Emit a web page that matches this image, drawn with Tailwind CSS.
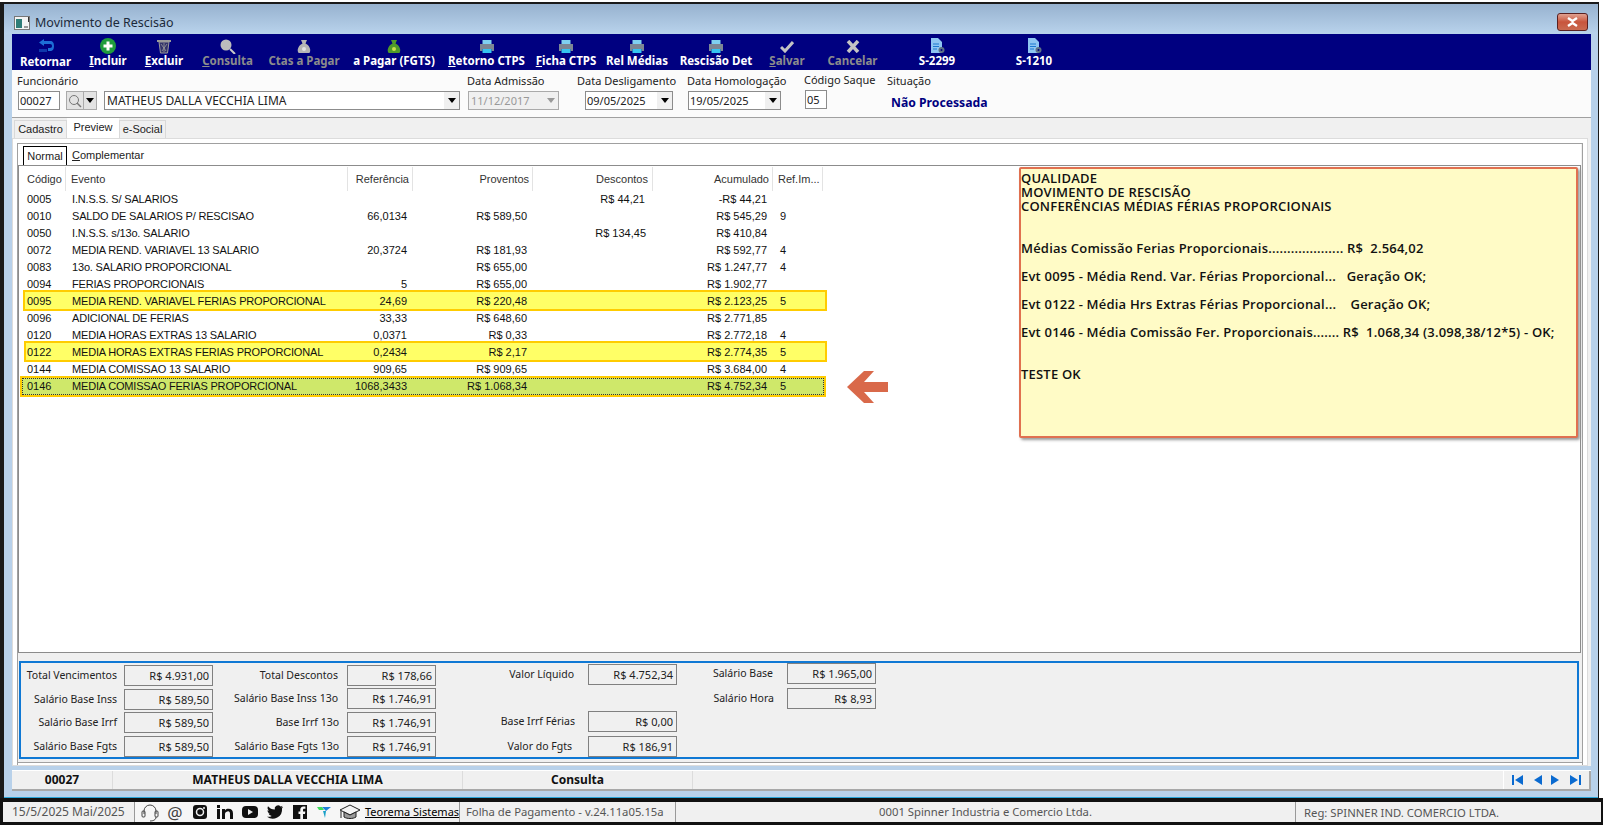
<!DOCTYPE html>
<html lang="pt-BR">
<head>
    <meta charset="UTF-8">
    <title>Movimento de Rescisão</title>
    <script src="https://cdn.jsdelivr.net/npm/@tailwindcss/browser@4"></script>
</head>
<body class="bg-white font-['Noto_Sans',sans-serif] text-[11px] text-black overflow-hidden">
<div class="w-[1603px] h-[825px] flex flex-col pt-[2px]">

    <!-- janela -->
    <div class="w-[1599px] h-[796px] flex flex-col border-t-2 border-l-4 border-r border-[#1a1a1a] bg-[#b8d1ea]">
        <div class="h-[30px] shrink-0 flex items-center justify-between pt-[8px] pl-[10px] pr-[10px] bg-gradient-to-b from-[#97b2cf] to-[#b9d3ec]">
            <div class="flex items-center gap-[5px]">
                <svg width="16" height="14" viewBox="0 0 16 14"><rect x="0.5" y="0.5" width="15" height="13" fill="#f4f4f4" stroke="#777"/><rect x="2" y="3" width="6" height="9" fill="#2f7d78"/><rect x="10" y="10" width="4" height="2" fill="#9a9a9a"/><rect x="14" y="1" width="1" height="5" fill="#333"/></svg>
                <span class="text-[12.500px] text-[#1c2a3a]">Movimento de Rescisão</span>
            </div>
            <div class="w-[31px] h-[18px] rounded-[3px] border border-[#5a2020] bg-gradient-to-b from-[#e0a090] via-[#c8553c] to-[#c96a50] flex items-center justify-center mb-[2px]">
                <svg width="13" height="10" viewBox="0 0 13 10"><path d="M2 1l4.500 3L11 1M2 9l4.500-3L11 9" stroke="#fff" stroke-width="2.400" fill="none"/></svg>
            </div>
        </div>

        <div class="flex-1 ml-[8px] mr-[7px] flex flex-col min-h-0">
            <!-- barra de ferramentas -->
            <div class="h-[36px] shrink-0 bg-[#000080] flex text-white font-bold text-[11.500px] leading-[14px]">
                <div class="w-[67px] flex flex-col items-center">
                    <svg class="mt-[5px]" width="16" height="15" viewBox="0 0 16 15"><path d="M6 0L1 3.500 6 7V5h6c1.500 0 2 .8 2 2s-.5 2-2 2H10v3h2c3 0 4-2 4-5s-1-5-4-5H6z" fill="#1d6fd6"/><path d="M2 10v3M4 10v3M6 10v3M8 10v3" stroke="#1d6fd6"/></svg>
                    <span class="mt-[1px]">Retornar</span>
                </div>
                <div class="w-[58px] flex flex-col items-center">
                    <svg class="mt-[4px]" width="16" height="16" viewBox="0 0 16 16"><circle cx="8" cy="8" r="8" fill="#1f9c3c"/><path d="M8 3.500v9M3.500 8h9" stroke="#fff" stroke-width="3"/></svg>
                    <span><u>I</u>ncluir</span>
                </div>
                <div class="w-[54px] flex flex-col items-center">
                    <svg class="mt-[5px]" width="14" height="15" viewBox="0 0 14 15"><path d="M0 1h14v2H0z" fill="#9a9a9a"/><path d="M2 3l1.500 11h7L12 3z" fill="#33336b" stroke="#9a9a9a"/><path d="M4 5l5 7M10 5l-5 7M7 4v9" stroke="#9a9a9a" stroke-width=".8"/></svg>
                    <span><u>E</u>xcluir</span>
                </div>
                <div class="w-[73px] flex flex-col items-center text-[#8c8c8c]">
                    <svg class="mt-[5px]" width="16" height="15" viewBox="0 0 16 15"><circle cx="6" cy="6" r="5.500" fill="#bdbdbd"/><path d="M10 10l5 5" stroke="#c8c8c8" stroke-width="2"/></svg>
                    <span><u>C</u>onsulta</span>
                </div>
                <div class="w-[80px] flex flex-col items-center text-[#8c8c8c]">
                    <svg class="mt-[5px]" width="14" height="15" viewBox="0 0 14 15"><path d="M4 1h6L8.500 4.500C12 6 14 10 13 13c-.3 1-1 1-2 1H3c-1 0-1.700 0-2-1C0 10 2 6 5.500 4.500z" fill="#b5b5b5"/><circle cx="7" cy="10" r="2" fill="#e2e2e2"/></svg>
                    <span>Ctas a Pagar</span>
                </div>
                <div class="w-[100px] flex flex-col items-center">
                    <svg class="mt-[5px]" width="14" height="15" viewBox="0 0 14 15"><path d="M4 1h6L8.500 4.500C12 6 14 10 13 13c-.3 1-1 1-2 1H3c-1 0-1.700 0-2-1C0 10 2 6 5.500 4.500z" fill="#4f9a2a"/><circle cx="7" cy="10" r="2" fill="#c9e04a"/></svg>
                    <span>a Pagar (FGTS)</span>
                </div>
                <div class="w-[85px] flex flex-col items-center">
                    <svg class="mt-[6px]" width="14" height="13" viewBox="0 0 14 13"><rect x="2.500" y="0" width="9" height="4" fill="#7fd0f0"/><rect x="0" y="4" width="14" height="5" fill="#7c8794"/><rect x="0" y="9" width="2.500" height="2" fill="#7c8794"/><rect x="11.500" y="9" width="2.500" height="2" fill="#7c8794"/><rect x="2.500" y="9" width="9" height="4" fill="#35c4f0"/></svg>
                    <span class="mt-[1px]"><u>R</u>etorno CTPS</span>
                </div>
                <div class="w-[74px] flex flex-col items-center">
                    <svg class="mt-[6px]" width="14" height="13" viewBox="0 0 14 13"><rect x="2.500" y="0" width="9" height="4" fill="#7fd0f0"/><rect x="0" y="4" width="14" height="5" fill="#7c8794"/><rect x="0" y="9" width="2.500" height="2" fill="#7c8794"/><rect x="11.500" y="9" width="2.500" height="2" fill="#7c8794"/><rect x="2.500" y="9" width="9" height="4" fill="#35c4f0"/></svg>
                    <span class="mt-[1px]"><u>F</u>icha CTPS</span>
                </div>
                <div class="w-[68px] flex flex-col items-center">
                    <svg class="mt-[6px]" width="14" height="13" viewBox="0 0 14 13"><rect x="2.500" y="0" width="9" height="4" fill="#7fd0f0"/><rect x="0" y="4" width="14" height="5" fill="#7c8794"/><rect x="0" y="9" width="2.500" height="2" fill="#7c8794"/><rect x="11.500" y="9" width="2.500" height="2" fill="#7c8794"/><rect x="2.500" y="9" width="9" height="4" fill="#35c4f0"/></svg>
                    <span class="mt-[1px]">Rel Médias</span>
                </div>
                <div class="w-[90px] flex flex-col items-center">
                    <svg class="mt-[6px]" width="14" height="13" viewBox="0 0 14 13"><rect x="2.500" y="0" width="9" height="4" fill="#7fd0f0"/><rect x="0" y="4" width="14" height="5" fill="#7c8794"/><rect x="0" y="9" width="2.500" height="2" fill="#7c8794"/><rect x="11.500" y="9" width="2.500" height="2" fill="#7c8794"/><rect x="2.500" y="9" width="9" height="4" fill="#35c4f0"/></svg>
                    <span class="mt-[1px]">Rescisão Det</span>
                </div>
                <div class="w-[52px] flex flex-col items-center text-[#8c8c8c]">
                    <svg class="mt-[6px]" width="14" height="13" viewBox="0 0 14 13"><path d="M1 7l4 4 8-9" stroke="#c4c4c4" stroke-width="3" fill="none"/></svg>
                    <span class="mt-[1px]"><u>S</u>alvar</span>
                </div>
                <div class="w-[79px] flex flex-col items-center text-[#8c8c8c]">
                    <svg class="mt-[6px]" width="14" height="13" viewBox="0 0 14 13"><path d="M2 1l10 11M12 1L2 12" stroke="#c4c4c4" stroke-width="3.500"/></svg>
                    <span class="mt-[1px]">Cancelar</span>
                </div>
                <div class="w-[90px] flex flex-col items-center">
                    <svg class="mt-[4px] ml-[2px]" width="14" height="16" viewBox="0 0 14 16"><path d="M0 0h7l4 4v11H0z" fill="#8ec5f2"/><path d="M2 6h6M2 8.500h6M2 11h4" stroke="#1c78d0"/><circle cx="10.500" cy="12" r="3" fill="#5d7286"/><circle cx="10.500" cy="12" r="1" fill="#000080"/></svg>
                    <span>S-2299</span>
                </div>
                <div class="w-[104px] flex flex-col items-center">
                    <svg class="mt-[4px] ml-[2px]" width="14" height="16" viewBox="0 0 14 16"><path d="M0 0h7l4 4v11H0z" fill="#8ec5f2"/><path d="M2 6h6M2 8.500h6M2 11h4" stroke="#1c78d0"/><circle cx="10.500" cy="12" r="3" fill="#5d7286"/><circle cx="10.500" cy="12" r="1" fill="#000080"/></svg>
                    <span>S-1210</span>
                </div>
            </div>

            <!-- cabecalho -->
            <div class="h-[48px] shrink-0 bg-[#fbfbfb] border-b border-[#a0a0a0] flex pl-[5px] text-[11px] text-[#222]">
                <div class="w-[450px] pt-[3px]">
                    <div class="leading-[16px]">Funcionário</div>
                    <div class="flex mt-[2px] h-[19px]">
                        <div class="w-[42px] ml-[1px] border border-[#8c8c8c] bg-white pl-[1px] leading-[17px]">00027</div>
                        <div class="ml-[6px] w-[18px] bg-[#e3e3e3] border border-[#aaa] flex items-center justify-center">
                            <svg width="14" height="14" viewBox="0 0 14 14"><circle cx="6" cy="6" r="4.500" fill="none" stroke="#777"/><path d="M9 9l4 4" stroke="#777" stroke-width="1.500"/></svg>
                        </div>
                        <div class="w-[13px] bg-[#e3e3e3] border border-l-0 border-[#aaa] flex items-center justify-center">
                            <div class="border-x-[4px] border-t-[5px] border-x-transparent border-t-black"></div>
                        </div>
                        <div class="ml-[7px] w-[356px] border border-[#8c8c8c] bg-white flex justify-between pl-[2px] text-[12px]">
                            <span class="leading-[17px]">MATHEUS DALLA VECCHIA LIMA</span>
                            <span class="w-[15px] bg-[#f0f0f0] flex items-center justify-center"><span class="border-x-[4px] border-t-[5px] border-x-transparent border-t-black"></span></span>
                        </div>
                    </div>
                </div>
                <div class="w-[110px] pt-[3px]">
                    <div class="leading-[16px]">Data Admissão</div>
                    <div class="mt-[2px] ml-[1px] h-[19px] w-[91px] border border-[#aaa] bg-[#f0f0f0] flex justify-between pl-[2px] text-[#999]">
                        <span class="leading-[17px]">11/12/2017</span>
                        <span class="w-[15px] flex items-center justify-center"><span class="border-x-[4px] border-t-[5px] border-x-transparent border-t-[#999]"></span></span>
                    </div>
                </div>
                <div class="w-[110px] pt-[3px]">
                    <div class="leading-[16px]">Data Desligamento</div>
                    <div class="mt-[2px] ml-[8px] h-[19px] w-[88px] border border-[#8c8c8c] bg-white flex justify-between pl-[1px]">
                        <span class="leading-[17px]">09/05/2025</span>
                        <span class="w-[15px] bg-[#f0f0f0] flex items-center justify-center"><span class="border-x-[4px] border-t-[5px] border-x-transparent border-t-black"></span></span>
                    </div>
                </div>
                <div class="w-[117px] pt-[3px]">
                    <div class="leading-[16px]">Data Homologação</div>
                    <div class="mt-[2px] ml-[1px] h-[19px] w-[93px] border border-[#8c8c8c] bg-white flex justify-between pl-[1px]">
                        <span class="leading-[17px]">19/05/2025</span>
                        <span class="w-[15px] bg-[#f0f0f0] flex items-center justify-center"><span class="border-x-[4px] border-t-[5px] border-x-transparent border-t-black"></span></span>
                    </div>
                </div>
                <div class="w-[83px] pt-[2px]">
                    <div class="leading-[16px]">Código Saque</div>
                    <div class="mt-[2px] ml-[1px] h-[19px] w-[22px] border border-[#8c8c8c] bg-white pl-[1px] leading-[17px]">05</div>
                </div>
                <div class="pt-[3px]">
                    <div class="leading-[16px]">Situação</div>
                    <div class="mt-[6px] ml-[4px] text-[12.200px] font-bold text-[#000080] leading-[16px]">Não Processada</div>
                </div>
            </div>

            <!-- abas -->
            <div class="flex-1 min-h-0 bg-[#f0f0f0] flex flex-col">
                <div class="h-[20px] shrink-0 flex items-end pl-[2px] font-['Liberation_Sans',sans-serif] text-[11px] text-[#222]">
                    <div class="w-[53px] h-[18px] border border-b-0 border-[#d9d9d9] bg-[#f0f0f0] flex items-center justify-center">Cadastro</div>
                    <div class="w-[52px] h-[20px] bg-white flex items-center justify-center pb-[2px]">Preview</div>
                    <div class="w-[47px] h-[18px] border border-b-0 border-[#d9d9d9] bg-[#f0f0f0] flex items-center justify-center">e-Social</div>
                </div>
                <div class="flex-1 min-h-0 mr-[3px] border border-[#dcdcdc] bg-white p-[4px] pb-0 flex flex-col">
                    <div class="flex-1 min-h-0 border-x border-t border-[#a0a0a0] flex flex-col bg-[#f0f0f0] pr-[1px]">
                        <div class="bg-white h-[21px] shrink-0 flex pt-[2px] pl-[5px] font-['Liberation_Sans',sans-serif] text-[#222]">
                            <div class="w-[44px] border-x border-t border-black flex items-center justify-center">Normal</div>
                            <div class="pl-[5px] flex items-center"><span><u>C</u>omplementar</span></div>
                        </div>

                        <!-- grade -->
                        <div class="h-[488px] shrink-0 border border-[#8c8c8c] bg-white flex">
                            <div class="w-[805px] shrink-0 text-[#111] font-['Liberation_Sans',sans-serif]">
                                <div class="h-[25px] pt-[1px] flex items-stretch text-[11px] text-[#333]">
                                    <div class="w-[47px] border-r border-[#e3e3e3] pl-[8px] leading-[24px]">Código</div>
                                    <div class="w-[282px] border-r border-[#e3e3e3] pl-[5px] leading-[24px]">Evento</div>
                                    <div class="w-[65px] border-r border-[#e3e3e3] pr-[3px] text-right leading-[24px]">Referência</div>
                                    <div class="w-[120px] border-r border-[#e3e3e3] pr-[3px] text-right leading-[24px]">Proventos</div>
                                    <div class="w-[120px] border-r border-[#e3e3e3] pr-[4px] text-right leading-[24px]">Descontos</div>
                                    <div class="w-[120px] border-r border-[#e3e3e3] pr-[3px] text-right leading-[24px]">Acumulado</div>
                                    <div class="w-[50px] border-r border-[#e3e3e3] pl-[5px] leading-[24px]">Ref.Im...</div>
                                </div>
                                <div class="h-[17px] flex leading-[17px]"><div class="w-[47px] pl-[8px]">0005</div><div class="w-[282px] pl-[6px] tracking-[-0.18px]">I.N.S.S. S/ SALARIOS</div><div class="w-[65px] pr-[6px] text-right"></div><div class="w-[120px] pr-[6px] text-right"></div><div class="w-[120px] pr-[8px] text-right">R$ 44,21</div><div class="w-[120px] pr-[6px] text-right">-R$ 44,21</div><div class="w-[50px] pl-[7px]"></div></div>
                                <div class="h-[17px] flex leading-[17px]"><div class="w-[47px] pl-[8px]">0010</div><div class="w-[282px] pl-[6px] tracking-[-0.18px]">SALDO DE SALARIOS P/ RESCISAO</div><div class="w-[65px] pr-[6px] text-right">66,0134</div><div class="w-[120px] pr-[6px] text-right">R$ 589,50</div><div class="w-[120px] pr-[8px] text-right"></div><div class="w-[120px] pr-[6px] text-right">R$ 545,29</div><div class="w-[50px] pl-[7px]">9</div></div>
                                <div class="h-[17px] flex leading-[17px]"><div class="w-[47px] pl-[8px]">0050</div><div class="w-[282px] pl-[6px] tracking-[-0.18px]">I.N.S.S. s/13o. SALARIO</div><div class="w-[65px] pr-[6px] text-right"></div><div class="w-[120px] pr-[6px] text-right"></div><div class="w-[120px] pr-[7px] text-right">R$ 134,45</div><div class="w-[120px] pr-[6px] text-right">R$ 410,84</div><div class="w-[50px] pl-[7px]"></div></div>
                                <div class="h-[17px] flex leading-[17px]"><div class="w-[47px] pl-[8px]">0072</div><div class="w-[282px] pl-[6px] tracking-[-0.18px]">MEDIA REND. VARIAVEL 13 SALARIO</div><div class="w-[65px] pr-[6px] text-right">20,3724</div><div class="w-[120px] pr-[6px] text-right">R$ 181,93</div><div class="w-[120px] pr-[8px] text-right"></div><div class="w-[120px] pr-[6px] text-right">R$ 592,77</div><div class="w-[50px] pl-[7px]">4</div></div>
                                <div class="h-[17px] flex leading-[17px]"><div class="w-[47px] pl-[8px]">0083</div><div class="w-[282px] pl-[6px] tracking-[-0.18px]">13o. SALARIO PROPORCIONAL</div><div class="w-[65px] pr-[6px] text-right"></div><div class="w-[120px] pr-[6px] text-right">R$ 655,00</div><div class="w-[120px] pr-[8px] text-right"></div><div class="w-[120px] pr-[6px] text-right">R$ 1.247,77</div><div class="w-[50px] pl-[7px]">4</div></div>
                                <div class="h-[17px] flex leading-[17px]"><div class="w-[47px] pl-[8px]">0094</div><div class="w-[282px] pl-[6px] tracking-[-0.18px]">FERIAS PROPORCIONAIS</div><div class="w-[65px] pr-[6px] text-right">5</div><div class="w-[120px] pr-[6px] text-right">R$ 655,00</div><div class="w-[120px] pr-[8px] text-right"></div><div class="w-[120px] pr-[6px] text-right">R$ 1.902,77</div><div class="w-[50px] pl-[7px]"></div></div>
                                <div class="relative h-[17px] flex leading-[17px]"><div class="absolute left-[4px] w-[804px] -top-[3px] h-[21px] border-2 border-[#ffcc00] bg-[#ffff66]"></div><div class="relative w-[47px] pl-[8px]">0095</div><div class="relative w-[282px] pl-[6px] tracking-[-0.18px]">MEDIA REND. VARIAVEL FERIAS PROPORCIONAL</div><div class="relative w-[65px] pr-[6px] text-right">24,69</div><div class="relative w-[120px] pr-[6px] text-right">R$ 220,48</div><div class="relative w-[120px] pr-[8px] text-right"></div><div class="relative w-[120px] pr-[6px] text-right">R$ 2.123,25</div><div class="relative w-[50px] pl-[7px]">5</div></div>
                                <div class="h-[17px] flex leading-[17px]"><div class="w-[47px] pl-[8px]">0096</div><div class="w-[282px] pl-[6px] tracking-[-0.18px]">ADICIONAL DE FERIAS</div><div class="w-[65px] pr-[6px] text-right">33,33</div><div class="w-[120px] pr-[6px] text-right">R$ 648,60</div><div class="w-[120px] pr-[8px] text-right"></div><div class="w-[120px] pr-[6px] text-right">R$ 2.771,85</div><div class="w-[50px] pl-[7px]"></div></div>
                                <div class="h-[17px] flex leading-[17px]"><div class="w-[47px] pl-[8px]">0120</div><div class="w-[282px] pl-[6px] tracking-[-0.18px]">MEDIA HORAS EXTRAS 13 SALARIO</div><div class="w-[65px] pr-[6px] text-right">0,0371</div><div class="w-[120px] pr-[6px] text-right">R$ 0,33</div><div class="w-[120px] pr-[8px] text-right"></div><div class="w-[120px] pr-[6px] text-right">R$ 2.772,18</div><div class="w-[50px] pl-[7px]">4</div></div>
                                <div class="relative h-[17px] flex leading-[17px]"><div class="absolute left-[5px] w-[803px] -top-[3px] h-[21px] border-2 border-[#ffcc00] bg-[#ffff66]"></div><div class="relative w-[47px] pl-[8px]">0122</div><div class="relative w-[282px] pl-[6px] tracking-[-0.18px]">MEDIA HORAS EXTRAS FERIAS PROPORCIONAL</div><div class="relative w-[65px] pr-[6px] text-right">0,2434</div><div class="relative w-[120px] pr-[6px] text-right">R$ 2,17</div><div class="relative w-[120px] pr-[8px] text-right"></div><div class="relative w-[120px] pr-[6px] text-right">R$ 2.774,35</div><div class="relative w-[50px] pl-[7px]">5</div></div>
                                <div class="h-[17px] flex leading-[17px]"><div class="w-[47px] pl-[8px]">0144</div><div class="w-[282px] pl-[6px] tracking-[-0.18px]">MEDIA COMISSAO 13 SALARIO</div><div class="w-[65px] pr-[6px] text-right">909,65</div><div class="w-[120px] pr-[6px] text-right">R$ 909,65</div><div class="w-[120px] pr-[8px] text-right"></div><div class="w-[120px] pr-[6px] text-right">R$ 3.684,00</div><div class="w-[50px] pl-[7px]">4</div></div>
                                <div class="relative h-[17px] flex leading-[17px]"><div class="absolute left-[1px] w-[806px] -top-[2px] h-[21px] border-2 border-[#ffcc00] bg-[#cfe86a]"><div class="h-full border border-dotted border-[#333]"></div></div><div class="relative w-[47px] pl-[8px]">0146</div><div class="relative w-[282px] pl-[6px] tracking-[-0.18px]">MEDIA COMISSAO FERIAS PROPORCIONAL</div><div class="relative w-[65px] pr-[6px] text-right">1068,3433</div><div class="relative w-[120px] pr-[6px] text-right">R$ 1.068,34</div><div class="relative w-[120px] pr-[8px] text-right"></div><div class="relative w-[120px] pr-[6px] text-right">R$ 4.752,34</div><div class="relative w-[50px] pl-[7px]">5</div></div>
                            </div>

                            <svg class="mt-[205px] ml-[23px] shrink-0" width="41" height="32" viewBox="0 0 41 32"><path d="M17 0h10L17 11h24v10H17l10 11H17L0 16z" fill="#d9694a"/></svg>

                            <!-- nota -->
                            <div class="ml-[131px] mt-[1px] w-[559px] h-[271px] shrink-0 border-2 border-[#e07050] rounded-[2px] bg-[#fffbc6] shadow-[2px_2px_3px_#999] pt-[2px] font-['Open_Sans',sans-serif] font-semibold text-[13px] tracking-[0.2px] leading-[14px] whitespace-pre text-[#111]">QUALIDADE
MOVIMENTO DE RESCISÃO
CONFERÊNCIAS MÉDIAS FÉRIAS PROPORCIONAIS


Médias Comissão Ferias Proporcionais.................... R$  2.564,02

Evt 0095 - Média Rend. Var. Férias Proporcional...   Geração OK;

Evt 0122 - Média Hrs Extras Férias Proporcional...    Geração OK;

Evt 0146 - Média Comissão Fer. Proporcionais....... R$  1.068,34 (3.098,38/12*5) - OK;


TESTE OK</div>
                        </div>

                        <!-- totais -->
                        <div class="flex-1 min-h-0 pt-[8px] pl-[1px] pr-[2px] pb-[3px] flex flex-col">
                            <div class="flex-1 border-2 border-[#0f78d4] flex text-[10.500px] text-[#222] whitespace-nowrap">
                                <div class="w-[192px] flex flex-col pt-[2px]">
                                    <div class="h-[21px] flex items-center justify-end"><span class="mr-[7px]">Total Vencimentos</span><span class="w-[89px] h-[21px] border border-[#808080] text-right pr-[3px] text-[11px] leading-[19px]">R$ 4.931,00</span></div>
                                    <div class="h-[21px] mt-[3px] flex items-center justify-end"><span class="mr-[7px]">Salário Base Inss</span><span class="w-[89px] h-[21px] border border-[#808080] text-right pr-[3px] text-[11px] leading-[19px]">R$ 589,50</span></div>
                                    <div class="h-[21px] mt-[2px] flex items-center justify-end"><span class="mr-[7px]">Salário Base Irrf</span><span class="w-[89px] h-[21px] border border-[#808080] text-right pr-[3px] text-[11px] leading-[19px]">R$ 589,50</span></div>
                                    <div class="h-[21px] mt-[3px] flex items-center justify-end"><span class="mr-[7px]">Salário Base Fgts</span><span class="w-[89px] h-[21px] border border-[#808080] text-right pr-[3px] text-[11px] leading-[19px]">R$ 589,50</span></div>
                                </div>
                                <div class="w-[223px] flex flex-col pt-[2px]">
                                    <div class="h-[21px] flex items-center justify-end"><span class="mr-[9px]">Total Descontos</span><span class="w-[89px] h-[21px] border border-[#808080] text-right pr-[3px] text-[11px] leading-[19px]">R$ 178,66</span></div>
                                    <div class="h-[21px] mt-[2px] flex items-center justify-end"><span class="mr-[9px]">Salário Base Inss 13o</span><span class="w-[89px] h-[21px] border border-[#808080] text-right pr-[3px] text-[11px] leading-[19px]">R$ 1.746,91</span></div>
                                    <div class="h-[21px] mt-[3px] flex items-center justify-end"><span class="mr-[8px]">Base Irrf 13o</span><span class="w-[89px] h-[21px] border border-[#808080] text-right pr-[3px] text-[11px] leading-[19px]">R$ 1.746,91</span></div>
                                    <div class="h-[21px] mt-[3px] flex items-center justify-end"><span class="mr-[8px]">Salário Base Fgts 13o</span><span class="w-[89px] h-[21px] border border-[#808080] text-right pr-[3px] text-[11px] leading-[19px]">R$ 1.746,91</span></div>
                                </div>
                                <div class="w-[241px] flex flex-col pt-[1px]">
                                    <div class="h-[21px] flex items-center justify-end"><span class="mr-[14px]">Valor Líquido</span><span class="w-[89px] h-[21px] border border-[#808080] text-right pr-[3px] text-[11px] leading-[19px]">R$ 4.752,34</span></div>
                                    <div class="h-[21px] mt-[26px] flex items-center justify-end"><span class="mr-[13px]">Base Irrf Férias</span><span class="w-[89px] h-[21px] border border-[#808080] text-right pr-[3px] text-[11px] leading-[19px]">R$ 0,00</span></div>
                                    <div class="h-[21px] mt-[4px] flex items-center justify-end"><span class="mr-[16px]">Valor do Fgts</span><span class="w-[89px] h-[21px] border border-[#808080] text-right pr-[3px] text-[11px] leading-[19px]">R$ 186,91</span></div>
                                </div>
                                <div class="w-[199px] flex flex-col">
                                    <div class="h-[21px] flex items-center justify-end"><span class="mr-[14px]">Salário Base</span><span class="w-[89px] h-[21px] border border-[#808080] text-right pr-[3px] text-[11px] leading-[19px]">R$ 1.965,00</span></div>
                                    <div class="h-[21px] mt-[4px] flex items-center justify-end"><span class="mr-[13px]">Salário Hora</span><span class="w-[89px] h-[21px] border border-[#808080] text-right pr-[3px] text-[11px] leading-[19px]">R$ 8,93</span></div>
                                </div>
                            </div>
                        </div>
                    </div>
                    <div class="h-[3px] shrink-0 border-x border-t border-[#a0a0a0]"></div>
                </div>

                <!-- status -->
                <div class="h-[25px] shrink-0 bg-[#b8d1ea]">
                    <div class="h-[21px] mt-[4px] bg-[#f0f0f0] border-t border-b-2 border-t-white border-b-[#a8a8a8] flex font-bold text-[12px] text-[#111] leading-[18px]">
                        <div class="w-[101px] text-center border-r border-[#dcdcdc]">00027</div>
                        <div class="w-[350px] text-center border-r border-[#dcdcdc] tracking-[0.1px]">MATHEUS DALLA VECCHIA LIMA</div>
                        <div class="w-[230px] text-center border-r border-[#dcdcdc]">Consulta</div>
                        <div class="flex-1"></div>
                        <div class="w-[88px] border-l border-white flex items-center justify-between px-[8px] border-r-2 border-r-[#a8a8a8]">
                            <svg width="11" height="10" viewBox="0 0 11 10"><path d="M0 0h2v10H0zM11 0v10L3 5z" fill="#0a6ad0"/></svg>
                            <svg width="9" height="10" viewBox="0 0 9 10"><path d="M9 0v10L1 5z" fill="#0a6ad0"/></svg>
                            <svg width="9" height="10" viewBox="0 0 9 10"><path d="M0 0v10l8-5z" fill="#0a6ad0"/></svg>
                            <svg width="11" height="10" viewBox="0 0 11 10"><path d="M0 0v10l8-5zM9 0h2v10H9z" fill="#0a6ad0"/></svg>
                        </div>
                    </div>
                </div>
            </div>
        </div>
        <div class="h-[7px] shrink-0 border-b border-[#2aa5d8]"></div>
    </div>

    <!-- rodape -->
    <div class="h-[27px] w-[1603px] bg-[#111] pt-[4px] pb-[3px] pl-[3px] pr-[2px] shrink-0">
        <div class="h-full bg-[#f0f0f0] flex items-center text-[11.300px] text-[#555]">
            <div class="w-[132px] pl-[9px] border-r border-[#999] h-full text-[12px] leading-[19px]">15/5/2025 Mai/2025</div>
            <div class="w-[230px] h-full flex items-center gap-[7px] pl-[6px] bg-white/40">
                <svg width="18" height="19" viewBox="0 0 18 19"><path d="M3 11V8a6 6 0 0112 0v3" fill="none" stroke="#444"/><rect x="1" y="8" width="3" height="6" rx="1" fill="none" stroke="#444"/><rect x="14" y="8" width="3" height="6" rx="1" fill="none" stroke="#444"/><path d="M15 14c0 3-3 4-6 4" fill="none" stroke="#444"/></svg>
                <span class="w-[18px] text-center text-[17px] leading-[19px] text-[#444]">@</span>
                <svg width="18" height="18" viewBox="0 0 18 18"><rect x="2" y="2" width="14" height="14" rx="3" fill="#111"/><circle cx="9" cy="9" r="3.500" fill="none" stroke="#f0f0f0" stroke-width="1.500"/><circle cx="13" cy="5" r="1" fill="#f0f0f0"/></svg>
                <svg width="18" height="18" viewBox="0 0 18 18"><path d="M1 6h3v10H1zM1 2h3v3H1zM6 6h3v1.500C10 6 11 5.800 12.500 5.800 15.500 5.800 17 7.500 17 10.500V16h-3v-5c0-1.800-.6-2.700-1.800-2.700S9 9.200 9 11v5H6z" fill="#111"/></svg>
                <svg width="18" height="18" viewBox="0 0 18 18"><rect x="1" y="3" width="16" height="12" rx="4" fill="#111"/><path d="M7 6l5 3-5 3z" fill="#f0f0f0"/></svg>
                <svg width="18" height="18" viewBox="0 0 18 18"><path d="M17 4c-.6.3-1.200.5-1.900.6.7-.4 1.200-1 1.500-1.800-.6.4-1.400.7-2.100.8A3.300 3.300 0 008.800 6.600C6 6.500 3.600 5.200 2 3.200c-.9 1.500-.4 3.400 1 4.400-.5 0-1-.2-1.500-.4 0 1.600 1.100 3 2.600 3.300-.5.100-1 .2-1.500.1.400 1.300 1.600 2.200 3.100 2.300A6.600 6.600 0 011 13.700 9.300 9.300 0 0016 5.400c.4-.4.800-.9 1-1.400z" fill="#111"/></svg>
                <svg width="18" height="18" viewBox="0 0 18 18"><path d="M2 2h14v14h-4v-5h2l.3-2.500H12V7c0-.8.300-1.200 1.200-1.200h1.200V3.500h-2C10.300 3.500 9.300 5 9.300 6.800v1.700H7.500V11h1.800v5H2z" fill="#111"/></svg>
                <svg width="16" height="14" viewBox="0 0 16 14"><path d="M1 2h5l2 3H3z" fill="#3ddc5a"/><path d="M6 2h9l-5 4z" fill="#1c7fd8"/><path d="M7 6h3l-1 7z" fill="#18a0c8"/></svg>
                <svg width="22" height="19" viewBox="0 0 22 19"><path d="M11 2L1 7l10 5 10-5z" fill="#f4f4f4" stroke="#222"/><path d="M5 9v5c3 2 9 2 12 0V9l-6 3z" fill="#999" stroke="#222"/><path d="M2 8v7" stroke="#222"/></svg>
            </div>
            <div class="w-[95px] h-full border-r border-[#999] text-[11px] text-black underline leading-[19px] whitespace-nowrap">Teorema Sistemas</div>
            <div class="w-[216px] h-full border-r border-[#999] pl-[6px] leading-[19px] whitespace-nowrap">Folha de Pagamento - v.24.11a05.15a</div>
            <div class="w-[620px] h-full border-r border-[#999] text-center leading-[19px] whitespace-nowrap">0001 Spinner Industria e Comercio Ltda.</div>
            <div class="flex-1 pl-[8px] leading-[19px] whitespace-nowrap">Reg: SPINNER IND. COMERCIO LTDA.</div>
        </div>
    </div>
</div>
</body>
</html>
